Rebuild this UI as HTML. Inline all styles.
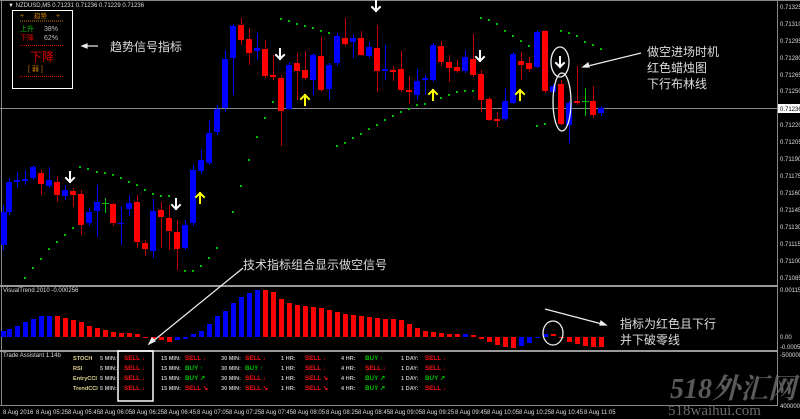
<!DOCTYPE html>
<html><head><meta charset="utf-8"><style>
html,body{margin:0;padding:0;background:#000;width:800px;height:419px;overflow:hidden}
svg{display:block}
.t{font-family:"Liberation Sans",sans-serif;font-size:6px;fill:#ddd}
.c{font-family:"Liberation Sans","Noto Sans CJK SC",sans-serif}
.ta{font-family:"Liberation Sans",sans-serif;font-size:5.6px;font-weight:bold}
</style></head><body>
<svg width="800" height="419" viewBox="0 0 800 419" xmlns="http://www.w3.org/2000/svg">
<rect width="800" height="419" fill="#000"/>
<line x1="0" y1="0.5" x2="800" y2="0.5" stroke="#888"/>
<line x1="1.5" y1="0" x2="1.5" y2="405" stroke="#888"/>
<line x1="777.5" y1="0" x2="777.5" y2="405" stroke="#888"/>
<rect x="0" y="285" width="778" height="2" fill="#999"/>
<rect x="0" y="350" width="778" height="2" fill="#999"/>
<line x1="0" y1="405.5" x2="778" y2="405.5" stroke="#888"/>
<line x1="0" y1="108.5" x2="777" y2="108.5" stroke="#888"/>
<text x="8" y="7" class="t">▼ NZDUSD,M5  0.71231 0.71236 0.71229 0.71236</text>
<text x="3" y="292" class="t">VisualTrend 2010 -0.000256</text>
<text x="3" y="357" class="t">Trade Assistant 1.14b</text>
<g class="t" font-size="5.5">
<text x="780" y="9">0.71325</text><text x="780" y="26">0.71310</text><text x="780" y="43">0.71295</text><text x="780" y="60">0.71280</text><text x="780" y="77">0.71265</text><text x="780" y="93">0.71250</text>
<text x="780" y="127">0.71220</text><text x="780" y="144">0.71205</text><text x="780" y="161">0.71190</text><text x="780" y="178">0.71175</text><text x="780" y="195">0.71160</text><text x="780" y="212">0.71145</text><text x="780" y="229">0.71130</text><text x="780" y="246">0.71115</text><text x="780" y="263">0.71100</text><text x="780" y="280">0.71085</text>
<text x="780" y="292">0.001152</text><text x="780" y="339">0.00</text><text x="780" y="349">-0.000534</text><text x="780" y="357">-5000000</text><text x="780" y="408">40000000</text>
</g>
<rect x="778" y="104" width="22" height="9" fill="#fff"/>
<text x="780" y="111" class="t" style="fill:#000">0.71236</text>
<g fill="#00c000">
<rect x="24" y="277" width="2" height="2"/><rect x="32" y="267" width="2" height="2"/><rect x="40" y="258" width="2" height="2"/><rect x="48" y="248" width="2" height="2"/><rect x="56" y="241" width="2" height="2"/><rect x="64" y="234" width="2" height="2"/><rect x="72" y="227" width="2" height="2"/>
<rect x="79" y="166" width="2" height="2"/><rect x="87" y="168" width="2" height="2"/><rect x="96" y="171" width="2" height="2"/><rect x="104" y="172" width="2" height="2"/><rect x="112" y="174" width="2" height="2"/><rect x="120" y="177" width="2" height="2"/><rect x="128" y="181" width="2" height="2"/><rect x="136" y="184" width="2" height="2"/><rect x="144" y="189" width="2" height="2"/><rect x="152" y="193" width="2" height="2"/><rect x="160" y="195" width="2" height="2"/><rect x="168" y="195" width="2" height="2"/>
<rect x="184" y="270" width="2" height="2"/><rect x="192" y="270" width="2" height="2"/><rect x="200" y="265" width="2" height="2"/><rect x="208" y="257" width="2" height="2"/><rect x="216" y="247" width="2" height="2"/><rect x="232" y="211" width="2" height="2"/><rect x="240" y="185" width="2" height="2"/><rect x="248" y="159" width="2" height="2"/><rect x="256" y="136" width="2" height="2"/><rect x="264" y="117" width="2" height="2"/><rect x="272" y="101" width="2" height="2"/>
<rect x="280" y="18" width="2" height="2"/><rect x="288" y="20" width="2" height="2"/><rect x="296" y="23" width="2" height="2"/><rect x="304" y="25" width="2" height="2"/><rect x="312" y="27" width="2" height="2"/><rect x="320" y="30" width="2" height="2"/><rect x="328" y="32" width="2" height="2"/>
<rect x="336" y="145" width="2" height="2"/><rect x="344" y="142" width="2" height="2"/><rect x="352" y="137" width="2" height="2"/><rect x="360" y="133" width="2" height="2"/><rect x="368" y="128" width="2" height="2"/><rect x="376" y="124" width="2" height="2"/><rect x="384" y="119" width="2" height="2"/><rect x="392" y="115" width="2" height="2"/><rect x="400" y="111" width="2" height="2"/><rect x="408" y="108" width="2" height="2"/><rect x="416" y="104" width="2" height="2"/><rect x="424" y="103" width="2" height="2"/><rect x="440" y="97" width="2" height="2"/><rect x="448" y="94" width="2" height="2"/><rect x="456" y="91" width="2" height="2"/><rect x="464" y="90" width="2" height="2"/><rect x="472" y="90" width="2" height="2"/>
<rect x="480" y="17" width="2" height="2"/><rect x="488" y="19" width="2" height="2"/><rect x="496" y="23" width="2" height="2"/><rect x="504" y="30" width="2" height="2"/><rect x="512" y="35" width="2" height="2"/><rect x="520" y="40" width="2" height="2"/><rect x="528" y="45" width="2" height="2"/>
<rect x="536" y="125" width="2" height="2"/><rect x="544" y="123" width="2" height="2"/>
<rect x="560" y="30" width="2" height="2"/><rect x="568" y="32" width="2" height="2"/><rect x="576" y="35" width="2" height="2"/><rect x="584" y="41" width="2" height="2"/><rect x="592" y="44" width="2" height="2"/><rect x="600" y="48" width="2" height="2"/>
</g>
<g>
<g stroke="#0000ff" stroke-width="1">
<line x1="3.5" y1="205" x2="3.5" y2="250"/><line x1="9.5" y1="178" x2="9.5" y2="215"/><line x1="17.5" y1="172" x2="17.5" y2="188"/><line x1="25.5" y1="170" x2="25.5" y2="185"/><line x1="33.5" y1="165" x2="33.5" y2="180"/><line x1="49.5" y1="167" x2="49.5" y2="188"/><line x1="65.5" y1="185" x2="65.5" y2="200"/><line x1="89.5" y1="208" x2="89.5" y2="226"/><line x1="97.5" y1="185" x2="97.5" y2="237"/><line x1="121.5" y1="206" x2="121.5" y2="245"/><line x1="129.5" y1="195" x2="129.5" y2="216"/><line x1="153.5" y1="199" x2="153.5" y2="258"/><line x1="185.5" y1="220" x2="185.5" y2="250"/><line x1="193.5" y1="165" x2="193.5" y2="226"/><line x1="201.5" y1="150" x2="201.5" y2="174"/><line x1="209.5" y1="120" x2="209.5" y2="165"/><line x1="217.5" y1="105" x2="217.5" y2="135"/><line x1="225.5" y1="50" x2="225.5" y2="112"/><line x1="233.5" y1="24" x2="233.5" y2="95"/><line x1="257.5" y1="33" x2="257.5" y2="60"/><line x1="289.5" y1="62" x2="289.5" y2="110"/><line x1="313.5" y1="53" x2="313.5" y2="95"/><line x1="329.5" y1="63" x2="329.5" y2="100"/><line x1="337.5" y1="33" x2="337.5" y2="66"/><line x1="353.5" y1="35" x2="353.5" y2="58"/><line x1="369.5" y1="42" x2="369.5" y2="58"/><line x1="385.5" y1="45" x2="385.5" y2="80"/><line x1="417.5" y1="69" x2="417.5" y2="100"/><line x1="425.5" y1="75" x2="425.5" y2="95"/><line x1="433.5" y1="43" x2="433.5" y2="82"/><line x1="465.5" y1="50" x2="465.5" y2="73"/><line x1="505.5" y1="88" x2="505.5" y2="121"/><line x1="513.5" y1="52" x2="513.5" y2="104"/><line x1="537.5" y1="30" x2="537.5" y2="68"/><line x1="553.5" y1="84" x2="553.5" y2="94"/><line x1="569.5" y1="101" x2="569.5" y2="143"/><line x1="601.5" y1="106" x2="601.5" y2="116"/>
</g>
<g fill="#0000ff">
<rect x="1" y="212" width="6" height="33"/><rect x="6" y="182" width="6" height="30"/><rect x="14" y="180" width="6" height="2"/><rect x="22" y="179" width="6" height="2"/><rect x="30" y="167" width="6" height="11"/><rect x="46" y="180" width="6" height="6"/><rect x="62" y="190" width="6" height="6"/><rect x="86" y="212" width="6" height="11"/><rect x="94" y="202" width="6" height="9"/><rect x="118" y="223" width="6" height="1"/><rect x="126" y="203" width="6" height="6"/><rect x="150" y="211" width="6" height="40"/><rect x="182" y="225" width="6" height="23"/><rect x="190" y="170" width="6" height="53"/><rect x="198" y="160" width="6" height="11"/><rect x="206" y="133" width="6" height="30"/><rect x="214" y="109" width="6" height="23"/><rect x="222" y="59" width="6" height="49"/><rect x="230" y="26" width="6" height="32"/><rect x="254" y="48" width="6" height="3"/><rect x="286" y="65" width="6" height="44"/><rect x="310" y="55" width="6" height="25"/><rect x="326" y="65" width="6" height="24"/><rect x="334" y="36" width="6" height="27"/><rect x="350" y="38" width="6" height="4"/><rect x="366" y="47" width="6" height="9"/><rect x="382" y="69" width="6" height="2"/><rect x="414" y="81" width="6" height="14"/><rect x="422" y="78" width="6" height="2"/><rect x="430" y="45" width="6" height="35"/><rect x="462" y="57" width="6" height="14"/><rect x="502" y="101" width="6" height="18"/><rect x="510" y="54" width="6" height="49"/><rect x="534" y="32" width="6" height="35"/><rect x="550" y="86" width="6" height="6"/><rect x="566" y="103" width="6" height="22"/><rect x="598" y="108" width="6" height="5"/>
</g>
<g stroke="#c00000" stroke-width="1">
<line x1="41.5" y1="170" x2="41.5" y2="195"/><line x1="57.5" y1="176" x2="57.5" y2="202"/><line x1="73.5" y1="188" x2="73.5" y2="207"/><line x1="81.5" y1="190" x2="81.5" y2="235"/><line x1="113.5" y1="203" x2="113.5" y2="226"/><line x1="137.5" y1="195" x2="137.5" y2="248"/><line x1="145.5" y1="240" x2="145.5" y2="256"/><line x1="161.5" y1="202" x2="161.5" y2="248"/><line x1="169.5" y1="205" x2="169.5" y2="250"/><line x1="177.5" y1="220" x2="177.5" y2="270"/><line x1="241.5" y1="18" x2="241.5" y2="45"/><line x1="249.5" y1="28" x2="249.5" y2="65"/><line x1="265.5" y1="40" x2="265.5" y2="78"/><line x1="273.5" y1="55" x2="273.5" y2="80"/><line x1="281.5" y1="75" x2="281.5" y2="146"/><line x1="297.5" y1="53" x2="297.5" y2="100"/><line x1="305.5" y1="51" x2="305.5" y2="80"/><line x1="321.5" y1="37" x2="321.5" y2="92"/><line x1="345.5" y1="18" x2="345.5" y2="46"/><line x1="361.5" y1="31" x2="361.5" y2="56"/><line x1="377.5" y1="25" x2="377.5" y2="92"/><line x1="393.5" y1="66" x2="393.5" y2="81"/><line x1="401.5" y1="51" x2="401.5" y2="92"/><line x1="409.5" y1="76" x2="409.5" y2="104"/><line x1="441.5" y1="41" x2="441.5" y2="66"/><line x1="449.5" y1="55" x2="449.5" y2="82"/><line x1="457.5" y1="60" x2="457.5" y2="73"/><line x1="473.5" y1="34" x2="473.5" y2="77"/><line x1="481.5" y1="70" x2="481.5" y2="112"/><line x1="489.5" y1="97" x2="489.5" y2="121"/><line x1="497.5" y1="112" x2="497.5" y2="127"/><line x1="521.5" y1="52" x2="521.5" y2="80"/><line x1="529.5" y1="57" x2="529.5" y2="72"/><line x1="545.5" y1="30" x2="545.5" y2="93"/><line x1="561.5" y1="80" x2="561.5" y2="125"/><line x1="577.5" y1="66" x2="577.5" y2="105"/><line x1="593.5" y1="86" x2="593.5" y2="118"/>
</g>
<g fill="#ff0000">
<rect x="38" y="173" width="6" height="11"/><rect x="54" y="182" width="6" height="13"/><rect x="70" y="191" width="6" height="4"/><rect x="78" y="194" width="6" height="31"/><rect x="110" y="204" width="6" height="19"/><rect x="134" y="202" width="6" height="40"/><rect x="142" y="243" width="6" height="6"/><rect x="158" y="210" width="6" height="7"/><rect x="166" y="218" width="6" height="13"/><rect x="174" y="232" width="6" height="17"/><rect x="238" y="25" width="6" height="15"/><rect x="246" y="39" width="6" height="14"/><rect x="262" y="49" width="6" height="27"/><rect x="270" y="75" width="6" height="2"/><rect x="278" y="78" width="6" height="33"/><rect x="294" y="63" width="6" height="8"/><rect x="302" y="70" width="6" height="8"/><rect x="318" y="56" width="6" height="34"/><rect x="342" y="38" width="6" height="6"/><rect x="358" y="38" width="6" height="17"/><rect x="374" y="48" width="6" height="23"/><rect x="390" y="70" width="6" height="2"/><rect x="398" y="69" width="6" height="21"/><rect x="406" y="90" width="6" height="2"/><rect x="438" y="46" width="6" height="16"/><rect x="446" y="62" width="6" height="6"/><rect x="454" y="67" width="6" height="4"/><rect x="470" y="59" width="6" height="16"/><rect x="478" y="74" width="6" height="26"/><rect x="486" y="99" width="6" height="21"/><rect x="494" y="119" width="6" height="2"/><rect x="518" y="61" width="6" height="4"/><rect x="526" y="63" width="6" height="6"/><rect x="542" y="31" width="6" height="60"/><rect x="558" y="84" width="6" height="40"/><rect x="574" y="101" width="6" height="2"/><rect x="590" y="101" width="6" height="14"/>
</g>
<g stroke="#00c000"><line x1="105.5" y1="198" x2="105.5" y2="213"/><line x1="102" y1="203.5" x2="109" y2="203.5"/><line x1="585.5" y1="88" x2="585.5" y2="116"/><line x1="582" y1="101.5" x2="589" y2="101.5"/></g>
</g>
<g fill="none" stroke-width="2" stroke-linecap="square">
<g stroke="#fff">
<path d="M70 172v10M66 178l4 4 4-4"/><path d="M176 199v10M172 205l4 4 4-4"/><path d="M280 49v10M276 55l4 4 4-4"/><path d="M376 1v10M372 7l4 4 4-4"/><path d="M480 51v10M476 57l4 4 4-4"/><path d="M560 57v10M556 63l4 4 4-4"/>
</g>
<g stroke="#ffff00">
<path d="M200 203v-10M196 197l4-4 4 4"/><path d="M305 105v-10M301 99l4-4 4 4"/><path d="M433 100v-10M429 94l4-4 4 4"/><path d="M520 100v-10M516 94l4-4 4 4"/>
</g>
</g>
<g fill="#0000ff">
<rect x="1" y="331" width="5" height="6"/><rect x="7" y="329" width="5" height="8"/><rect x="15" y="326" width="5" height="11"/><rect x="23" y="322" width="5" height="15"/><rect x="31" y="319" width="5" height="18"/><rect x="39" y="316" width="5" height="21"/><rect x="47" y="316" width="5" height="21"/>
<rect x="175" y="337" width="5" height="3"/><rect x="183" y="337" width="5" height="2"/><rect x="191" y="334" width="5" height="3"/><rect x="199" y="331" width="5" height="6"/><rect x="207" y="324" width="5" height="13"/><rect x="215" y="316" width="5" height="21"/><rect x="223" y="311" width="5" height="26"/><rect x="231" y="303" width="5" height="34"/><rect x="239" y="297" width="5" height="40"/><rect x="247" y="293" width="5" height="44"/><rect x="255" y="290" width="5" height="47"/>
<rect x="463" y="334" width="5" height="3"/><rect x="519" y="337" width="5" height="9"/><rect x="527" y="337" width="5" height="6"/><rect x="535" y="337" width="5" height="1"/><rect x="543" y="334" width="5" height="3"/>
</g>
<g fill="#ff0000">
<rect x="55" y="316" width="5" height="21"/><rect x="63" y="318" width="5" height="19"/><rect x="71" y="320" width="5" height="17"/><rect x="79" y="322" width="5" height="15"/><rect x="87" y="326" width="5" height="11"/><rect x="95" y="328" width="5" height="9"/><rect x="103" y="330" width="5" height="7"/><rect x="111" y="332" width="5" height="5"/><rect x="119" y="333" width="5" height="4"/><rect x="127" y="333" width="5" height="4"/><rect x="135" y="334" width="5" height="3"/><rect x="143" y="337" width="5" height="1"/><rect x="151" y="337" width="5" height="2"/><rect x="159" y="337" width="5" height="3"/><rect x="167" y="337" width="5" height="5"/>
<rect x="263" y="290" width="5" height="47"/><rect x="271" y="292" width="5" height="45"/><rect x="279" y="299" width="5" height="38"/><rect x="287" y="303" width="5" height="34"/><rect x="295" y="305" width="5" height="32"/><rect x="303" y="306" width="5" height="31"/><rect x="311" y="307" width="5" height="30"/><rect x="319" y="308" width="5" height="29"/><rect x="327" y="310" width="5" height="27"/><rect x="335" y="312" width="5" height="25"/><rect x="343" y="314" width="5" height="23"/><rect x="351" y="315" width="5" height="22"/><rect x="359" y="316" width="5" height="21"/><rect x="367" y="317" width="5" height="20"/><rect x="375" y="318" width="5" height="19"/><rect x="383" y="319" width="5" height="18"/><rect x="391" y="319" width="5" height="18"/><rect x="399" y="320" width="5" height="17"/><rect x="407" y="324" width="5" height="13"/><rect x="415" y="328" width="5" height="9"/><rect x="423" y="331" width="5" height="6"/><rect x="431" y="332" width="5" height="5"/><rect x="439" y="333" width="5" height="4"/><rect x="447" y="334" width="5" height="3"/><rect x="455" y="334" width="5" height="3"/><rect x="471" y="335" width="5" height="2"/><rect x="479" y="337" width="5" height="2"/><rect x="487" y="337" width="5" height="5"/><rect x="495" y="337" width="5" height="8"/><rect x="503" y="337" width="5" height="10"/><rect x="511" y="337" width="5" height="11"/>
<rect x="551" y="334" width="5" height="2"/><rect x="559" y="337" width="5" height="1"/><rect x="567" y="337" width="5" height="5"/><rect x="575" y="337" width="5" height="7"/><rect x="583" y="337" width="5" height="9"/><rect x="591" y="337" width="5" height="10"/><rect x="599" y="337" width="5" height="10"/>
</g>
<rect x="12.5" y="10.5" width="60" height="78" fill="none" stroke="#fff"/>
<g class="c" font-size="7">
<text x="20" y="18" fill="#d08000">+</text><text x="34" y="18" fill="#d08000" font-size="6.5">趋势</text><text x="56" y="18" fill="#d08000">+</text>
<line x1="20" y1="21" x2="64" y2="21" stroke="#d08000" stroke-dasharray="1 1"/>
<text x="20" y="31" fill="#00c000">上升</text><text x="44" y="31" fill="#bbb">38%</text>
<text x="20" y="40" fill="#e00000">下降</text><text x="44" y="40" fill="#bbb">62%</text>
<line x1="20" y1="45.5" x2="64" y2="45.5" stroke="#e00000" stroke-dasharray="1 1"/>
<text x="30" y="61" fill="#e00000" font-size="12">下降</text>
<text x="28" y="71" fill="#d08000" font-size="7">[ 弱 ]</text>
<line x1="20" y1="76.5" x2="64" y2="76.5" stroke="#e00000" stroke-dasharray="1 1"/>
</g>
<g stroke="#eee" stroke-width="1.2" fill="#eee">
<line x1="86" y1="46" x2="98" y2="46"/><path d="M82 46l5-2v4z"/>
<line x1="243" y1="268" x2="152" y2="342"/><path d="M149 344l3-6 3 3z"/>
<line x1="641" y1="53" x2="588" y2="66"/><path d="M583 67l5-4 1 4z"/>
<line x1="545" y1="309" x2="602" y2="324"/><path d="M606 325l-5-4-1 4z"/>
</g>
<g fill="none" stroke="#eee" stroke-width="1.3">
<ellipse cx="560" cy="62" rx="9" ry="15"/><ellipse cx="562" cy="102" rx="9" ry="29"/><ellipse cx="553" cy="333" rx="10" ry="12"/>
</g>
<g class="c" font-size="12" fill="#ddd">
<text x="110" y="51">趋势信号指标</text>
<text x="243" y="269">技术指标组合显示做空信号</text>
<text x="647" y="56">做空进场时机</text><text x="647" y="72">红色蜡烛图</text><text x="647" y="88">下行布林线</text>
<text x="620" y="328">指标为红色且下行</text><text x="620" y="344">并下破零线</text>
</g>
<rect x="118" y="351" width="35" height="50" fill="none" stroke="#fff" stroke-width="1.5"/>
<g class="ta">
<g fill="#e0d090"><text x="73" y="360">STOCH</text><text x="73" y="370">RSI</text><text x="73" y="380">EntryCCI</text><text x="73" y="390">TrendCCI</text></g>
<g fill="#bbb">
<text x="100" y="360">5 MIN:</text><text x="100" y="370">5 MIN:</text><text x="100" y="380">5 MIN:</text><text x="100" y="390">5 MIN:</text>
<text x="161" y="360">15 MIN:</text><text x="161" y="370">15 MIN:</text><text x="161" y="380">15 MIN:</text><text x="161" y="390">15 MIN:</text>
<text x="221" y="360">30 MIN:</text><text x="221" y="370">30 MIN:</text><text x="221" y="380">30 MIN:</text><text x="221" y="390">30 MIN:</text>
<text x="281" y="360">1 HR:</text><text x="281" y="370">1 HR:</text><text x="281" y="380">1 HR:</text><text x="281" y="390">1 HR:</text>
<text x="341" y="360">4 HR:</text><text x="341" y="370">4 HR:</text><text x="341" y="380">4 HR:</text><text x="341" y="390">4 HR:</text>
<text x="401" y="360">1 DAY:</text><text x="401" y="370">1 DAY:</text><text x="401" y="380">1 DAY:</text><text x="401" y="390">1 DAY:</text>
</g>
<g fill="#ff1010" font-size="6.3">
<text x="124" y="360">SELL ↓</text><text x="124" y="370">SELL ↓</text><text x="124" y="380">SELL ↓</text><text x="124" y="390">SELL ↓</text>
<text x="185" y="360">SELL ↓</text><text x="185" y="390">SELL ↘</text>
<text x="245" y="360">SELL ↓</text><text x="245" y="380">SELL ↓</text><text x="245" y="390">SELL ↘</text>
<text x="305" y="360">SELL ↓</text><text x="305" y="370">SELL ↓</text><text x="305" y="380">SELL ↘</text><text x="305" y="390">SELL ↘</text>
<text x="365" y="370">SELL ↓</text>
<text x="425" y="360">SELL ↓</text><text x="425" y="370">SELL ↓</text><text x="425" y="390">SELL ↓</text>
</g>
<g fill="#00c000" font-size="6.3">
<text x="185" y="370">BUY ↑</text><text x="185" y="380">BUY ↗</text><text x="245" y="370">BUY ↑</text>
<text x="365" y="360">BUY ↑</text><text x="365" y="380">BUY ↗</text><text x="365" y="390">BUY ↗</text><text x="425" y="380">BUY ↗</text>
</g>
</g>
<g class="t" font-size="4.8">
<text x="3" y="414">8 Aug 2016</text><text x="36" y="414">8 Aug 05:25</text><text x="68" y="414">8 Aug 05:45</text><text x="100" y="414">8 Aug 06:05</text><text x="132" y="414">8 Aug 06:25</text><text x="164" y="414">8 Aug 06:45</text><text x="197" y="414">8 Aug 07:05</text><text x="229" y="414">8 Aug 07:25</text><text x="261" y="414">8 Aug 07:45</text><text x="293" y="414">8 Aug 08:05</text><text x="326" y="414">8 Aug 08:25</text><text x="358" y="414">8 Aug 08:45</text><text x="390" y="414">8 Aug 09:05</text><text x="422" y="414">8 Aug 09:25</text><text x="455" y="414">8 Aug 09:45</text><text x="487" y="414">8 Aug 10:05</text><text x="519" y="414">8 Aug 10:25</text><text x="551" y="414">8 Aug 10:45</text><text x="584" y="414">8 Aug 11:05</text>
</g>
<text x="670" y="398" font-family="'Liberation Serif','Noto Serif CJK SC',serif" font-style="italic" font-weight="bold" font-size="28" fill="#6a6a6a" fill-opacity="0.85">518外汇网</text>
<text x="668" y="415" font-family="'Liberation Serif',serif" font-size="15" fill="#777" fill-opacity="0.9">518waihui.com</text>
</svg>
</body></html>
